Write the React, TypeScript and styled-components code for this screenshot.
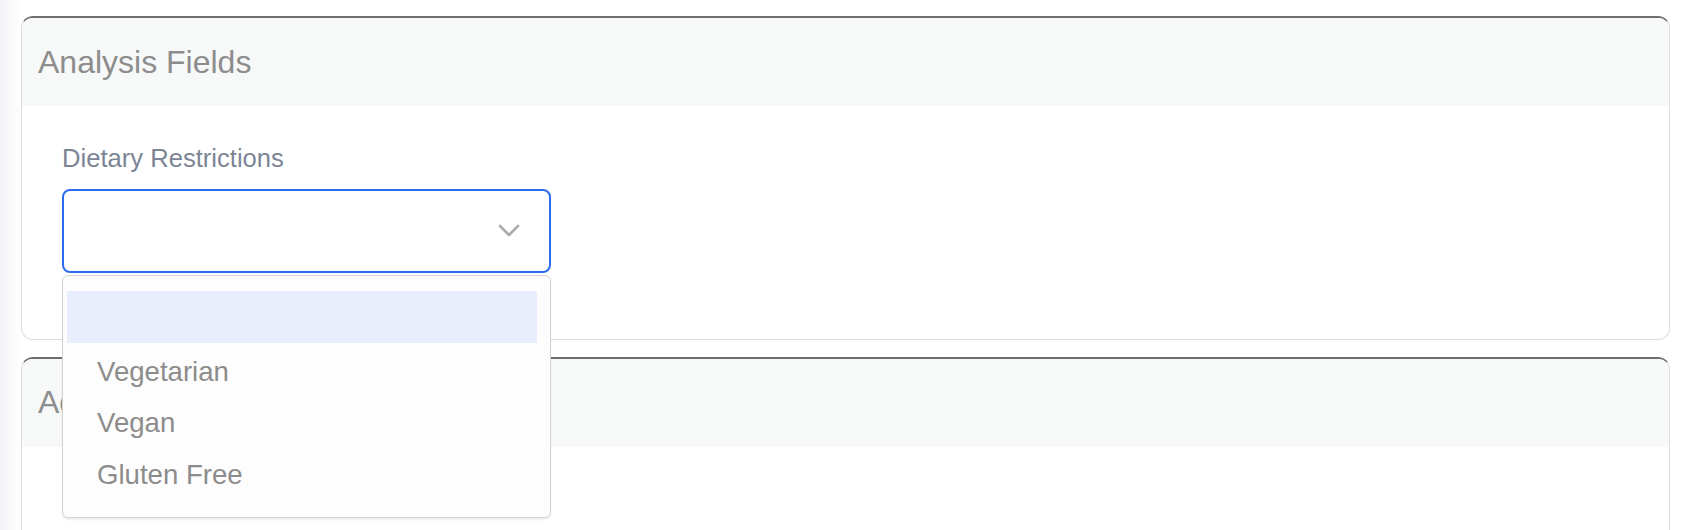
import React from "react";
import styled, { createGlobalStyle } from "styled-components";

const GlobalStyle = createGlobalStyle`
  html, body {
    margin: 0;
    padding: 0;
    background: linear-gradient(to right, #f1f2f5 0px, #fbfbfc 14px, #ffffff 22px);
    font-family: "Liberation Sans", Arial, Helvetica, sans-serif;
  }
`;

const Page = styled.div`
  display: flex;
  flex-direction: column;
  gap: 17px;
  padding: 16px 18px 0 21px;
  height: 530px;
  box-sizing: border-box;
  overflow: hidden;
`;

const Card = styled.section<{ $raised?: boolean }>`
  position: relative;
  z-index: ${(p) => (p.$raised ? 2 : 1)};
  border: 1.5px solid #dedede;
  border-top: 2px solid #6e6e6e;
  border-radius: 12px;
  background: #ffffff;
  flex-shrink: 0;
`;

const CardHeader = styled.header`
  height: 88px;
  display: flex;
  align-items: center;
  padding: 0 16px;
  background: #f7f9f8;
  border-radius: 10px 10px 0 0;
  font-size: 32px;
  color: #8d8d8d;
`;

const CardBody = styled.div`
  padding: 37px 40px 65.5px;
`;

const Field = styled.div`
  position: relative;
  width: 489px;
`;

const Label = styled.label`
  display: block;
  font-size: 25.6px;
  line-height: 31px;
  color: #7c8596;
  margin-bottom: 15px;
`;

const SelectBox = styled.div<{ $open?: boolean }>`
  height: 84px;
  box-sizing: border-box;
  border: 2px solid ${(p) => (p.$open ? "#2d6cf0" : "#d6d6d6")};
  border-radius: 8px;
  background: #ffffff;
  display: flex;
  align-items: center;
  justify-content: flex-end;
  padding-right: 29px;
`;

const Menu = styled.ul`
  position: absolute;
  top: calc(100% + 2px);
  left: 0;
  width: 489px;
  box-sizing: border-box;
  margin: 0;
  padding: 15px 13px 20px 4px;
  list-style: none;
  background: #fdfdfd;
  border: 1.5px solid #d3d3d3;
  border-radius: 6px;
  box-shadow: 0 2px 2px rgba(0, 0, 0, 0.07);
  z-index: 10;
`;

const Option = styled.li<{ $active?: boolean }>`
  height: 51.6px;
  box-sizing: border-box;
  display: flex;
  align-items: center;
  padding: 7px 0 0 30px;
  font-size: 27.6px;
  color: #8c8c8c;
  background: ${(p) => (p.$active ? "#e8eefb" : "transparent")};
`;

const Chevron = () => (
  <svg width="22" height="14" viewBox="0 0 22 14" fill="none">
    <polyline
      points="2,2 11,11 20,2"
      stroke="#ababab"
      strokeWidth="2.6"
      strokeLinecap="round"
      strokeLinejoin="round"
    />
  </svg>
);

const options = ["", "Vegetarian", "Vegan", "Gluten Free"];

export default function App() {
  return (
    <>
      <GlobalStyle />
      <Page>
        <Card $raised>
          <CardHeader>Analysis Fields</CardHeader>
          <CardBody>
            <Field>
              <Label>Dietary Restrictions</Label>
              <SelectBox $open>
                <Chevron />
              </SelectBox>
              <Menu>
                {options.map((o, i) => (
                  <Option key={i} $active={i === 0}>
                    {o}
                  </Option>
                ))}
              </Menu>
            </Field>
          </CardBody>
        </Card>
        <Card>
          <CardHeader>Additional Information</CardHeader>
          <CardBody>
            <Field>
              <Label>Allergies</Label>
              <SelectBox>
                <Chevron />
              </SelectBox>
            </Field>
          </CardBody>
        </Card>
      </Page>
    </>
  );
}
